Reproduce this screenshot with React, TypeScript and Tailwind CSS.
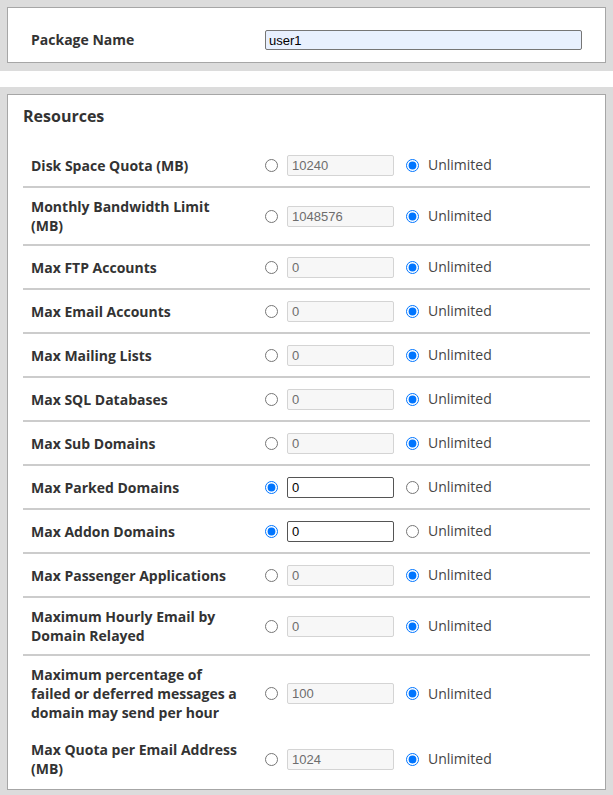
import React from 'react';

type Row = {
  label: string;
  value: string;
  unlimited: boolean;
  noBorder?: boolean;
};

const rows: Row[] = [
  { label: 'Disk Space Quota (MB)', value: '10240', unlimited: true },
  { label: 'Monthly Bandwidth Limit (MB)', value: '1048576', unlimited: true },
  { label: 'Max FTP Accounts', value: '0', unlimited: true },
  { label: 'Max Email Accounts', value: '0', unlimited: true },
  { label: 'Max Mailing Lists', value: '0', unlimited: true },
  { label: 'Max SQL Databases', value: '0', unlimited: true },
  { label: 'Max Sub Domains', value: '0', unlimited: true },
  { label: 'Max Parked Domains', value: '0', unlimited: false },
  { label: 'Max Addon Domains', value: '0', unlimited: false },
  { label: 'Max Passenger Applications', value: '0', unlimited: true },
  { label: 'Maximum Hourly Email by Domain Relayed', value: '0', unlimited: true },
  {
    label: 'Maximum percentage of failed or deferred messages a domain may send per hour',
    value: '100',
    unlimited: true,
    noBorder: true,
  },
  { label: 'Max Quota per Email Address (MB)', value: '1024', unlimited: true, noBorder: true },
];

function ResourceRow({ row, idx }: { row: Row; idx: number }) {
  const name = `res_${idx}`;
  return (
    <div
      className={`flex items-center ${row.noBorder ? '' : 'border-b-2 border-[#cccccc]'}`}
    >
      <div className="w-[226px] shrink-0 px-2 py-[9px] text-sm font-bold leading-[19px] text-[#333]">
        {row.label}
      </div>
      <div className="flex min-h-[42px] items-center py-2 pl-4">
        <input
          type="radio"
          name={name}
          defaultChecked={!row.unlimited}
          className="m-0 block h-[13px] w-[13px]"
        />
        <input
          type="text"
          defaultValue={row.value}
          disabled={row.unlimited}
          className={`ml-[9px] block h-[21px] w-[107px] rounded-[2px] border px-[4px] font-['Liberation_Sans',Arial,sans-serif] text-[13px] outline-none ${
            row.unlimited
              ? 'border-[#d4d4d4] bg-[#f7f7f7] text-[#6d6d6d]'
              : 'border-[#555] bg-white text-black'
          }`}
        />
        <input
          type="radio"
          name={name}
          defaultChecked={row.unlimited}
          className="m-0 ml-[12px] block h-[13px] w-[13px]"
        />
        <span className="ml-[9px] text-sm text-[#444]">Unlimited</span>
      </div>
    </div>
  );
}

export default function App() {
  return (
    <div className="min-h-screen bg-white font-['Open_Sans',sans-serif]">
      {/* package name well */}
      <div className="bg-[#dcdcdc] px-[7px] pt-[7px] pb-[8px]">
        <div className="border border-[#a6a6a6] bg-white px-[15px] pt-[22px] pb-[12px]">
          <div className="flex h-[20px] items-center">
            <div className="w-[226px] shrink-0 px-2 text-sm font-bold text-[#333]">Package Name</div>
            <div className="flex-1 pr-2 pl-4">
              <input
                type="text"
                defaultValue="user1"
                className="block h-[20px] w-full rounded-[2px] border border-[#767676] bg-[#e8f0fe] px-[3px] font-['Liberation_Sans',Arial,sans-serif] text-[13px] text-black outline-none"
              />
            </div>
          </div>
        </div>
      </div>

      <div className="h-[16px]" />

      {/* resources well */}
      <div className="bg-[#dcdcdc] px-[7px] pt-[7px] pb-[7px]">
        <div className="border border-[#a6a6a6] bg-white px-[15px] pt-[10px] pb-[2px]">
          <h3 className="mb-[17px] text-base leading-[22px] font-bold text-[#333]">Resources</h3>
          <div>
            {rows.map((r, i) => (
              <ResourceRow key={r.label} row={r} idx={i} />
            ))}
          </div>
        </div>
      </div>
    </div>
  );
}
